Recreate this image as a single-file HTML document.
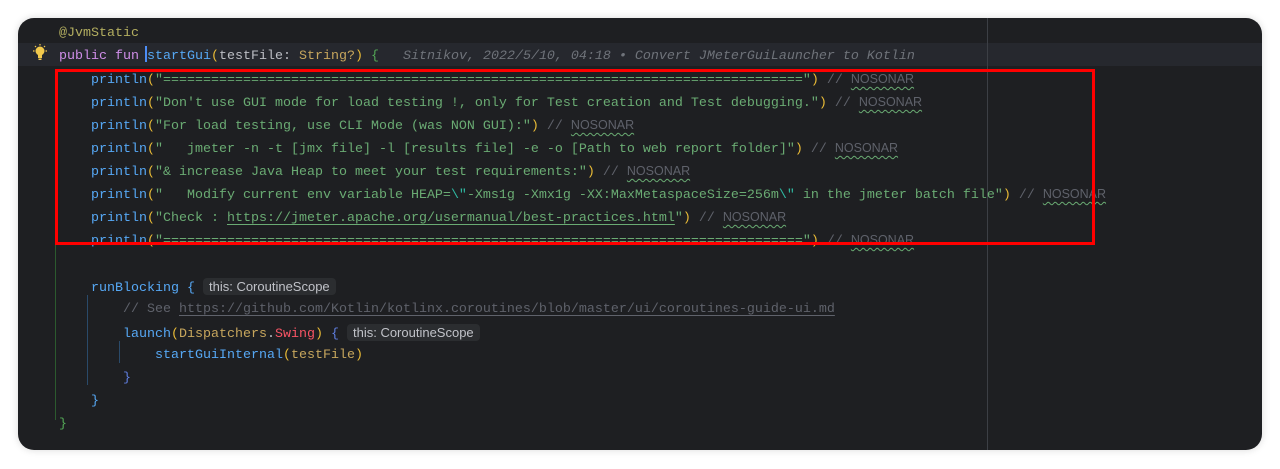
<!DOCTYPE html>
<html><head><meta charset="utf-8"><style>
html,body{margin:0;padding:0;background:#fff;width:1280px;height:469px;overflow:hidden}
#p{position:absolute;left:18px;top:18px;width:1244px;height:432px;background:#1e1f22;border-radius:16px;overflow:hidden;box-shadow:0 0 8px rgba(0,0,0,.15)}
.l{position:absolute;left:0;height:23px;line-height:23px;margin-top:2px;font-family:"Liberation Mono",monospace;font-size:13.33px;white-space:pre;color:#bcbec4}
.f{color:#56a8f5}.s{color:#6aab73}.y{color:#e8ba36}.k{color:#cf8ee8}.c{color:#5f626b}.a{color:#b3ae60}.t{color:#c7a65d}.r{color:#f75464}.e{color:#2fbaa3}.g{color:#54a857}.b{color:#5f7ee0}
.n{font-family:"Liberation Sans",sans-serif;font-size:12.5px;color:#5f626b;text-decoration:underline wavy #6aab73;text-decoration-thickness:1px;text-underline-offset:3px}
.u{text-decoration:underline;text-underline-offset:3px}
.h{font-family:"Liberation Sans",sans-serif;font-size:13px;color:#c0c2c8;background:#2b2d30;border-radius:4px;padding:1px 6px}
.i{color:#6f737a;font-style:italic}
</style></head><body>
<div id="p">
<div style="position:absolute;left:0;top:25px;width:1244px;height:23px;background:#26282e"></div>
<div style="position:absolute;left:969px;top:0;width:1px;height:432px;background:#3c3f45"></div>
<div style="position:absolute;left:37px;top:67px;width:1px;height:335px;background:#2c5a2e"></div>
<div style="position:absolute;left:69px;top:277px;width:1px;height:90px;background:#2a4a6a"></div>
<div style="position:absolute;left:101px;top:323px;width:1px;height:22px;background:#2a4a6a"></div>
<svg style="position:absolute;left:14px;top:26px" width="16" height="18" viewBox="0 0 16 18"><circle cx="8" cy="7" r="4.5" fill="#f2c94c"/><rect x="6" y="10" width="4" height="4" fill="#f2c94c"/><rect x="6.5" y="14.5" width="3" height="1.5" fill="#f2c94c"/><g stroke="#f2c94c" stroke-width="1.2"><line x1="8" y1="0" x2="8" y2="1.5"/><line x1="1" y1="7" x2="2.5" y2="7"/><line x1="13.5" y1="7" x2="15" y2="7"/><line x1="3" y1="2" x2="4" y2="3"/><line x1="13" y1="2" x2="12" y2="3"/></g></svg>
<div class="l" style="top:2px;left:41px"><span class="a">@JvmStatic</span></div>
<div class="l" style="top:25px;left:41px"><span class="k">public fun </span><span style="display:inline-block;width:2px;height:16px;background:#4c8df6;vertical-align:-3px;margin-left:-2px"></span><span class="f">startGui</span><span class="y">(</span>testFile: <span class="t">String?</span><span class="y">)</span> <span class="g">{</span>   <span class="i">Sitnikov, 2022/5/10, 04:18 • Convert JMeterGuiLauncher to Kotlin</span></div>
<div class="l" style="top:48px;left:73px"><span class="f">println</span><span class="y">(</span><span class="s">"================================================================================"</span><span class="y">)</span> <span class="c">// </span><span class="n">NOSONAR</span></div>
<div class="l" style="top:71px;left:73px"><span class="f">println</span><span class="y">(</span><span class="s">"Don't use GUI mode for load testing !, only for Test creation and Test debugging."</span><span class="y">)</span> <span class="c">// </span><span class="n">NOSONAR</span></div>
<div class="l" style="top:94px;left:73px"><span class="f">println</span><span class="y">(</span><span class="s">"For load testing, use CLI Mode (was NON GUI):"</span><span class="y">)</span> <span class="c">// </span><span class="n">NOSONAR</span></div>
<div class="l" style="top:117px;left:73px"><span class="f">println</span><span class="y">(</span><span class="s">"   jmeter -n -t [jmx file] -l [results file] -e -o [Path to web report folder]"</span><span class="y">)</span> <span class="c">// </span><span class="n">NOSONAR</span></div>
<div class="l" style="top:140px;left:73px"><span class="f">println</span><span class="y">(</span><span class="s">"&amp; increase Java Heap to meet your test requirements:"</span><span class="y">)</span> <span class="c">// </span><span class="n">NOSONAR</span></div>
<div class="l" style="top:163px;left:73px"><span class="f">println</span><span class="y">(</span><span class="s">"   Modify current env variable HEAP=<span class="e">\"</span>-Xms1g -Xmx1g -XX:MaxMetaspaceSize=256m<span class="e">\"</span> in the jmeter batch file"</span><span class="y">)</span> <span class="c">// </span><span class="n">NOSONAR</span></div>
<div class="l" style="top:186px;left:73px"><span class="f">println</span><span class="y">(</span><span class="s">"Check : <span class="u">https://jmeter.apache.org/usermanual/best-practices.html</span>"</span><span class="y">)</span> <span class="c">// </span><span class="n">NOSONAR</span></div>
<div class="l" style="top:209px;left:73px"><span class="f">println</span><span class="y">(</span><span class="s">"================================================================================"</span><span class="y">)</span> <span class="c">// </span><span class="n">NOSONAR</span></div>
<div class="l" style="top:255px;left:73px"><span class="f">runBlocking</span> <span class="f">{</span> <span class="h">this: CoroutineScope</span></div>
<div class="l" style="top:278px;left:105px"><span class="c">// See <span class="u">https://github.com/Kotlin/kotlinx.coroutines/blob/master/ui/coroutines-guide-ui.md</span></span></div>
<div class="l" style="top:301px;left:105px"><span class="f">launch</span><span class="y">(</span><span class="t">Dispatchers</span>.<span class="r">Swing</span><span class="y">)</span> <span class="b">{</span> <span class="h">this: CoroutineScope</span></div>
<div class="l" style="top:324px;left:137px"><span class="f">startGuiInternal</span><span class="y">(</span><span class="t">testFile</span><span class="y">)</span></div>
<div class="l" style="top:347px;left:105px"><span class="b">}</span></div>
<div class="l" style="top:370px;left:73px"><span class="f">}</span></div>
<div class="l" style="top:393px;left:41px"><span class="g">}</span></div>
<div style="position:absolute;left:37px;top:51px;width:1034px;height:170px;border:3px solid #f00"></div>
</div>
</body></html>
